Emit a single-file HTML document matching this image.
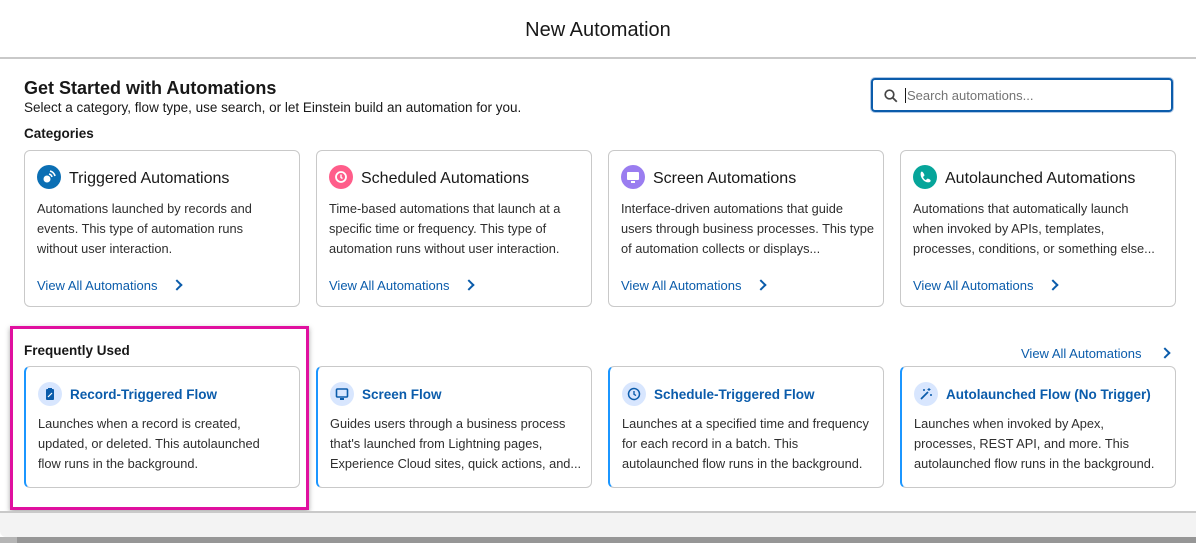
<!DOCTYPE html>
<html><head><meta charset="utf-8"><style>
*{box-sizing:border-box;margin:0;padding:0}
body{width:1196px;height:543px;overflow:hidden;background:#fff;font-family:"Liberation Sans",sans-serif;color:#181818;position:relative}
.hdr{position:absolute;left:0;top:0;width:1196px;height:59px;border-bottom:2px solid #c9c9c9;text-align:center;font-size:20px;line-height:60px;color:#181818}
.abs{position:absolute}
h1{position:absolute;left:24px;top:78px;font-size:18px;font-weight:bold}
.sub{left:24px;top:100px;font-size:13.5px}
.cat{left:24px;top:126px;font-size:13.5px;font-weight:bold}
.search{left:871px;top:78px;width:302px;height:34px;border:2px solid #0b5cab;border-radius:4px;box-shadow:0 0 0 1px #b0c8e6}
.search span{position:absolute;left:32px;top:8px;font-size:13px;color:#747474;border-left:1px solid #181818;padding-left:1px;line-height:15px}
.card{position:absolute;width:276px;border:1px solid #c9c9c9;border-radius:6px;background:#fff}
.r1{top:150px;height:157px}
.r2{top:366px;height:122px;border-left:2px solid #1b96ff}
.ic{position:absolute;left:12px;top:14px;width:24px;height:24px;border-radius:50%}
.r1 .t{position:absolute;left:44px;top:19px;font-size:16px;color:#181818}
.d{position:absolute;left:12px;font-size:12.8px;line-height:20px;color:#2e2e2e;white-space:nowrap}
.r1 .d{top:48px}
.r2 .d{top:47px;left:12px}
.va{position:absolute;left:12px;top:127px;font-size:13px;color:#0b5cab}
.chev{display:inline-block;width:8px;height:8px;border-top:2px solid #0b5cab;border-right:2px solid #0b5cab;transform:rotate(45deg);margin-left:16px;position:relative;top:-1px}
.r2 .ic{left:12px;top:15px;background:#d8e6fe}
.r2 .t{position:absolute;left:44px;top:20px;font-size:13.5px;font-weight:bold;color:#0b5cab}
.pink{left:10px;top:326px;width:299px;height:184px;border:3px solid #e0109f;box-shadow:0 2px 5px rgba(0,0,0,.35)}
.fu{left:24px;top:343px;font-size:13.5px;font-weight:bold}
.va2{left:1021px;top:346px;font-size:13px;color:#0b5cab}
.foot{left:0;top:511px;width:1196px;height:26px;background:#f3f3f3;border-top:2px solid #c9c9c9;border-radius:0 0 0 6px}
.bot{left:0;top:537px;width:1196px;height:6px;background:#969696}
.bot2{left:0;top:537px;width:17px;height:6px;background:#b5b5b5}
</style></head><body>
<div class="hdr">New Automation</div>
<h1>Get Started with Automations</h1>
<div class="abs sub">Select a category, flow type, use search, or let Einstein build an automation for you.</div>
<div class="abs cat">Categories</div>
<div class="abs search"><svg class="abs" style="left:11px;top:9px" width="14" height="14" viewBox="0 0 14 14"><circle cx="5.5" cy="5.5" r="4.3" fill="none" stroke="#444" stroke-width="1.7"/><path d="M8.7 8.7L12.8 12.8" stroke="#444" stroke-width="1.8"/></svg><span>Search automations...</span></div>

<div class="card r1" style="left:24px"><div class="ic" style="background:#0b6fb4"><svg width="24" height="24"><circle cx="10" cy="14" r="3.5" fill="#fff"/><path d="M12 9a4 4 0 0 1 3 3M13 6a7 7 0 0 1 5 5" stroke="#fff" stroke-width="1.6" fill="none"/></svg></div><div class="t">Triggered Automations</div><div class="d">Automations launched by records and<br>events. This type of automation runs<br>without user interaction.</div><div class="va">View All Automations<span class="chev"></span></div></div>
<div class="card r1" style="left:316px"><div class="ic" style="background:#ff5d8a"><svg width="24" height="24"><circle cx="12" cy="12" r="5" fill="none" stroke="#fff" stroke-width="1.8"/><path d="M12 9.5v3l1.5 1" stroke="#fff" stroke-width="1.4" fill="none"/></svg></div><div class="t">Scheduled Automations</div><div class="d">Time-based automations that launch at a<br>specific time or frequency. This type of<br>automation runs without user interaction.</div><div class="va">View All Automations<span class="chev"></span></div></div>
<div class="card r1" style="left:608px"><div class="ic" style="background:#9a7df0"><svg width="24" height="24"><rect x="6" y="7" width="12" height="8" rx="1" fill="#fff"/><rect x="10" y="16" width="4" height="2" fill="#fff"/></svg></div><div class="t">Screen Automations</div><div class="d">Interface-driven automations that guide<br>users through business processes. This type<br>of automation collects or displays...</div><div class="va">View All Automations<span class="chev"></span></div></div>
<div class="card r1" style="left:900px"><div class="ic" style="background:#06a59a"><svg width="24" height="24"><path d="M8 7c1-1 2 0 3 2s0 2-1 3c1 2 2 3 3 3 1-1 1-2 3-1s2 2 1 3c-5 2-11-5-9-10z" fill="#fff"/></svg></div><div class="t">Autolaunched Automations</div><div class="d">Automations that automatically launch<br>when invoked by APIs, templates,<br>processes, conditions, or something else...</div><div class="va">View All Automations<span class="chev"></span></div></div>

<div class="abs fu">Frequently Used</div>
<div class="abs va2">View All Automations<span class="chev" style="margin-left:20px"></span></div>
<div class="card r2" style="left:24px"><div class="ic"><svg width="24" height="24"><rect x="8" y="7" width="8" height="11" rx="1" fill="#0b5cab"/><rect x="10" y="6" width="4" height="2" fill="#0b5cab"/><path d="M10 15l4-4" stroke="#fff" stroke-width="1.2"/></svg></div><div class="t">Record-Triggered Flow</div><div class="d">Launches when a record is created,<br>updated, or deleted. This autolaunched<br>flow runs in the background.</div></div>
<div class="card r2" style="left:316px"><div class="ic"><svg width="24" height="24"><rect x="6.5" y="7" width="11" height="8" rx="1" fill="none" stroke="#0b5cab" stroke-width="1.6"/><rect x="10" y="16" width="4" height="2" fill="#0b5cab"/></svg></div><div class="t">Screen Flow</div><div class="d">Guides users through a business process<br>that's launched from Lightning pages,<br>Experience Cloud sites, quick actions, and...</div></div>
<div class="card r2" style="left:608px"><div class="ic"><svg width="24" height="24"><circle cx="12" cy="12" r="5.5" fill="none" stroke="#0b5cab" stroke-width="1.5"/><path d="M12 9v3.3l2 1.3" stroke="#0b5cab" stroke-width="1.4" fill="none"/></svg></div><div class="t">Schedule-Triggered Flow</div><div class="d">Launches at a specified time and frequency<br>for each record in a batch. This<br>autolaunched flow runs in the background.</div></div>
<div class="card r2" style="left:900px"><div class="ic"><svg width="24" height="24"><path d="M7 17l7-7" stroke="#0b5cab" stroke-width="1.8"/><path d="M15 6v3M13.5 7.5h3M17 12v2M16 13h2M10 7v2M9 8h2" stroke="#0b5cab" stroke-width="1.1"/></svg></div><div class="t">Autolaunched Flow (No Trigger)</div><div class="d">Launches when invoked by Apex,<br>processes, REST API, and more. This<br>autolaunched flow runs in the background.</div></div>

<div class="abs pink"></div>
<div class="abs foot"></div>
<div class="abs bot"></div><div class="abs bot2"></div>
</body></html>
